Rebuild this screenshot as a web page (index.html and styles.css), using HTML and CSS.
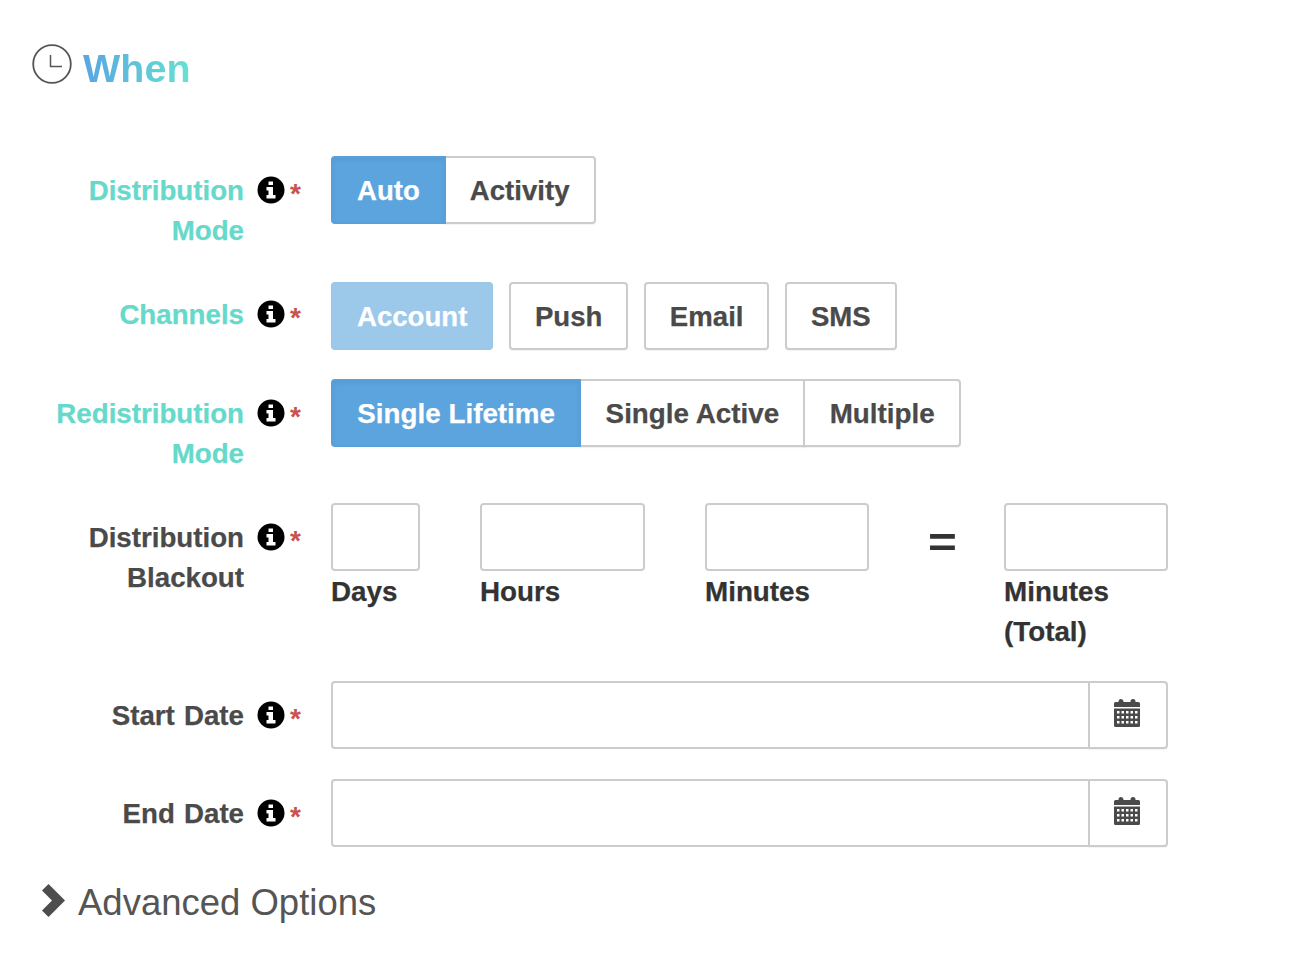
FILE: index.html
```html
<!DOCTYPE html>
<html>
  <head>
    <title>When</title>
    <link rel="stylesheet" href="styles.css">
  </head>
  <body>
    <svg class="defs" width="0" height="0">
      <symbol id="info" viewBox="0 0 28 28">
        <circle cx="14" cy="14" r="13.500" fill="#000"/>
        <path fill="#fff" d="M11.500 5.500h4.500v3.500h-4.500zM9.500 11h6.500v8h2.500v3.500H9.500V19h2v-4.500h-2z"/>
      </symbol>
      <symbol id="calendar" viewBox="0 0 26 28">
        <path fill="#4a4a4a" d="M4.500 2.500a2.500 2.500 0 0 1 5 0V3h7V2.500a2.500 2.500 0 0 1 5 0V3h3A1.500 1.500 0 0 1 26 4.500V8H0V4.500A1.500 1.500 0 0 1 1.500 3h3z"/>
        <path fill="#4a4a4a" fill-rule="evenodd" d="M0 9.500h26V26.500A1.500 1.500 0 0 1 24.500 28H1.500A1.500 1.500 0 0 1 0 26.500zM3 12v2.500h2.500V12zm4.500 0v2.500H10V12zM12 12v2.500h2.500V12zm4.500 0v2.500H19V12zM21 12v2.500h2.500V12zM3 17v2.500h2.500V17zm4.500 0v2.500H10V17zM12 17v2.500h2.500V17zm4.500 0v2.500H19V17zM21 17v2.500h2.500V17zM3 22v2.500h2.500V22zm4.500 0v2.500H10V22zM12 22v2.500h2.500V22zm4.500 0v2.500H19V22zM21 22v2.500h2.500V22z"/>
      </symbol>
    </svg>

    <div class="section-title">
      <svg class="clock" width="40" height="40" viewBox="0 0 40 40">
        <circle cx="20" cy="20" r="18.800" fill="none" stroke="#555" stroke-width="1.800"/>
        <path d="M18.500 11V22.500H30" fill="none" stroke="#555" stroke-width="1.500"/>
      </svg>
      <h2>When</h2>
    </div>

    <form class="form">
      <div class="row row-first">
        <div class="label done">Distribution Mode</div>
        <div class="marks"><svg class="info"><use href="#info"/></svg><span class="req">*</span></div>
        <div class="btn-group">
          <button type="button" class="btn active">Auto</button>
          <button type="button" class="btn">Activity</button>
        </div>
      </div>

      <div class="row row-tight row-channels">
        <div class="label done">Channels</div>
        <div class="marks"><svg class="info"><use href="#info"/></svg><span class="req">*</span></div>
        <div class="btn-list">
          <button type="button" class="btn active disabled">Account</button>
          <button type="button" class="btn">Push</button>
          <button type="button" class="btn">Email</button>
          <button type="button" class="btn">SMS</button>
        </div>
      </div>

      <div class="row row-tight">
        <div class="label done">Redistribution Mode</div>
        <div class="marks"><svg class="info"><use href="#info"/></svg><span class="req">*</span></div>
        <div class="btn-group btn-group-wide">
          <button type="button" class="btn active">Single Lifetime</button>
          <button type="button" class="btn">Single Active</button>
          <button type="button" class="btn">Multiple</button>
        </div>
      </div>

      <div class="row row-tight">
        <div class="label">Distribution Blackout</div>
        <div class="marks"><svg class="info"><use href="#info"/></svg><span class="req">*</span></div>
        <div class="blackout">
          <div class="time time-days"><input type="text"><label>Days</label></div>
          <div class="time time-hours"><input type="text"><label>Hours</label></div>
          <div class="time time-wide"><input type="text"><label>Minutes</label></div>
          <div class="equals">=</div>
          <div class="time time-wide"><input type="text"><label>Minutes (Total)</label></div>
        </div>
      </div>

      <div class="row">
        <div class="label">Start Date</div>
        <div class="marks"><svg class="info"><use href="#info"/></svg><span class="req">*</span></div>
        <div class="date-group">
          <input type="text">
          <button type="button" class="date-btn"><svg class="cal"><use href="#calendar"/></svg></button>
        </div>
      </div>

      <div class="row">
        <div class="label">End Date</div>
        <div class="marks"><svg class="info"><use href="#info"/></svg><span class="req">*</span></div>
        <div class="date-group">
          <input type="text">
          <button type="button" class="date-btn"><svg class="cal"><use href="#calendar"/></svg></button>
        </div>
      </div>
    </form>

    <div class="advanced">
      <svg class="chevron" width="24" height="34" viewBox="0 0 24 34">
        <path fill="#4d4d4d" d="M0 6.500L6.500 0L23 16.500L6.500 33L0 26.500L10 16.500z"/>
      </svg>
      <span class="advanced-text">Advanced Options</span>
    </div>
  </body>
</html>
```

FILE: styles.css
```css
* {
  box-sizing: border-box;
}

body {
  margin: 0;
  padding: 44px 0 0 32px;
  font-family: "Liberation Sans", Arial, sans-serif;
  font-size: 28px;
  line-height: 40px;
  color: #4a4a4a;
  background: #fff;
}

.defs {
  position: absolute;
}

.section-title {
  display: flex;
  align-items: center;
  gap: 11px;
  height: 40px;
  margin-bottom: 72px;
}

.section-title h2 {
  margin: 8px 0 0;
  font-size: 39.500px;
  line-height: 48px;
  font-weight: bold;
  background: linear-gradient(90deg, #5aa5e2, #66e2d2);
  -webkit-background-clip: text;
  background-clip: text;
  color: transparent;
}

.row {
  display: flex;
  align-items: flex-start;
  margin-bottom: 30px;
}

.row-first {
  margin-bottom: 31px;
}

.row-tight {
  margin-bottom: 29px;
}

.label {
  width: 212px;
  padding-top: 15px;
  font-weight: bold;
  font-size: 27.700px;
  word-spacing: 1.500px;
  text-align: right;
  -webkit-text-stroke: 0.25px;
}

.label.done {
  color: #66d9cb;
}

.marks {
  display: flex;
  align-items: flex-start;
  width: 87px;
  padding: 20px 0 0 13px;
}

.row-channels .label {
  padding-top: 13px;
}

.row-channels .marks {
  padding-top: 18px;
}

.info {
  width: 28px;
  height: 28px;
}

.req {
  margin-left: 5px;
  font-size: 28px;
  line-height: 36px;
  font-weight: bold;
  color: #c9534f;
}

.btn-group,
.btn-list {
  display: flex;
}

.btn-list {
  gap: 15.500px;
}

.btn {
  height: 68px;
  padding: 2px 24px 0;
  border: 2px solid #ccc;
  border-radius: 4px;
  background: #fff;
  color: #4a4a4a;
  font: bold 27.600px/40px "Liberation Sans", Arial, sans-serif;
  -webkit-text-stroke: 0.25px;
  box-shadow: 0 1px 1px rgba(0, 0, 0, 0.05);
}

.btn-group-wide .btn {
  padding: 2px 24.300px 0;
  font-size: 27.800px;
}

.btn.active {
  background: #5ba4de;
  border-color: #5a9fd8;
  color: #fff;
  box-shadow: inset 0 2px 4px rgba(0, 0, 0, 0.06);
}

.btn.disabled {
  background: #9cc8ea;
  border-color: #9cc6e8;
  box-shadow: none;
}

.btn-group .btn:not(:first-child) {
  margin-left: -2px;
  border-top-left-radius: 0;
  border-bottom-left-radius: 0;
}

.btn-group .btn:not(:last-child) {
  border-top-right-radius: 0;
  border-bottom-right-radius: 0;
}

.btn-group .active {
  position: relative;
  z-index: 1;
}

input {
  display: block;
  width: 100%;
  height: 68px;
  border: 2px solid #ccc;
  border-radius: 4px;
  background: #fff;
  outline: none;
}

.blackout {
  display: flex;
  align-items: flex-start;
}

.time label {
  display: block;
  padding-top: 1px;
  font-weight: bold;
  font-size: 27.800px;
  color: #333;
  -webkit-text-stroke: 0.25px;
}

.time-days {
  width: 89px;
  margin-right: 60px;
}

.time-hours {
  width: 165px;
  margin-right: 60px;
}

.time-wide {
  width: 164px;
  margin-right: 60px;
}

.equals {
  width: 27px;
  margin-right: 48px;
  font-size: 43px;
  line-height: 78px;
  font-weight: bold;
  color: #333;
  text-align: center;
  transform: scaleX(1.15);
}

.blackout .time:last-child {
  margin-right: 0;
}

.date-group {
  display: flex;
  width: 837px;
}

.date-group input {
  flex: 1;
  border-radius: 4px 0 0 4px;
}

.date-btn {
  display: flex;
  align-items: center;
  justify-content: center;
  width: 80px;
  height: 68px;
  margin-left: -2px;
  padding: 0 3px 4px 0;
  border: 2px solid #ccc;
  border-radius: 0 4px 4px 0;
  background: #fff;
  box-shadow: 0 1px 1px rgba(0, 0, 0, 0.05);
}

.cal {
  width: 26px;
  height: 28px;
}

.advanced {
  display: flex;
  align-items: center;
  gap: 12px;
  height: 48px;
  margin: 4px 0 0 10px;
  font-size: 36.500px;
  color: #555;
}

.advanced-text {
  margin-top: 3px;
}
```
